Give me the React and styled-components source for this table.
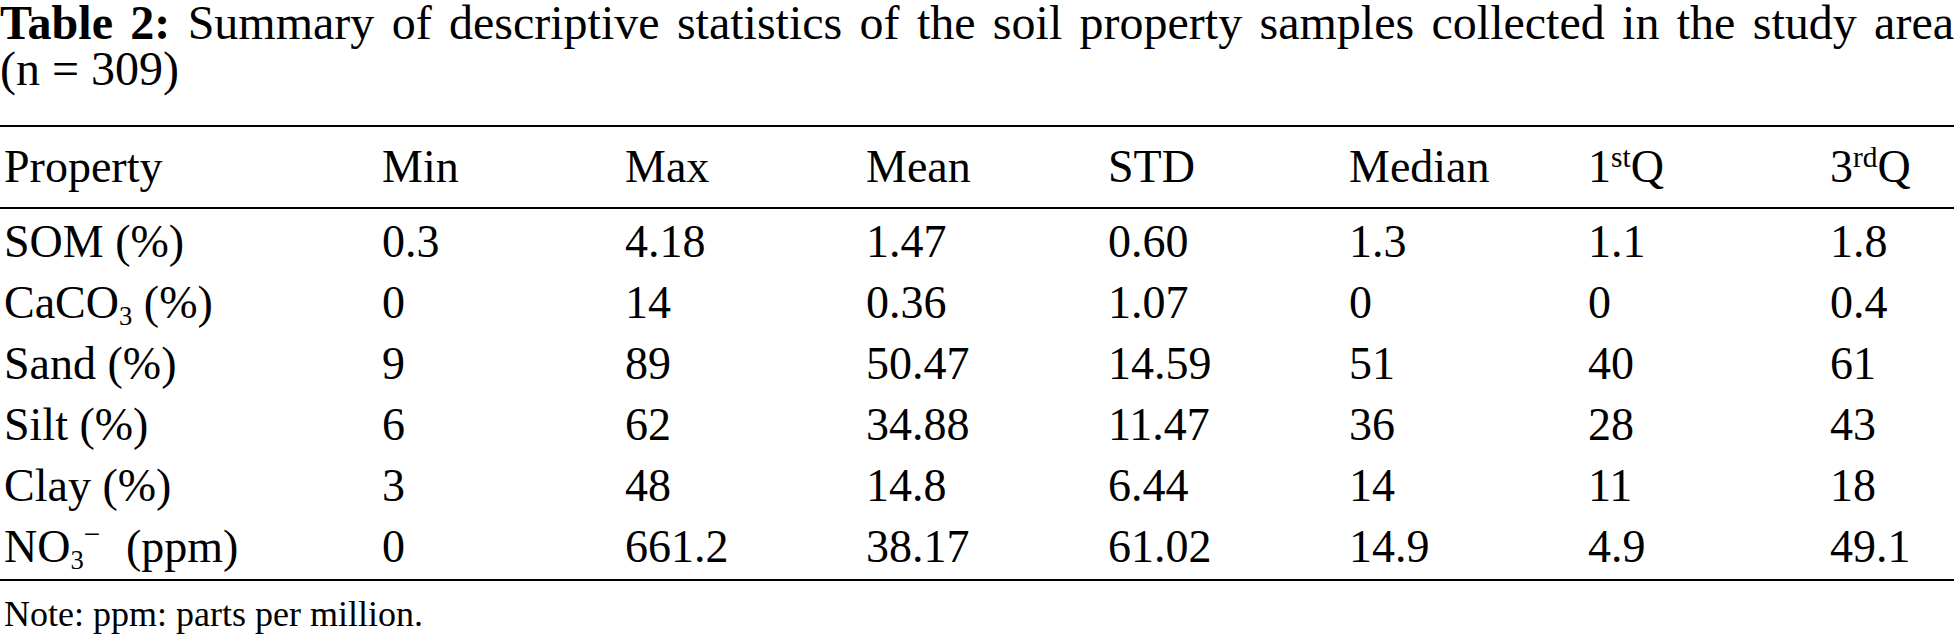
import React from "react";
import styled, { createGlobalStyle } from "styled-components";

const GlobalStyle = createGlobalStyle`
  html, body {
    margin: 0;
    padding: 0;
    background: #fff;
  }
`;

const Page = styled.div`
  width: 1954px;
  background: #fff;
  color: #000;
  font-family: "Liberation Serif", "Times New Roman", serif;
`;

const Caption = styled.div`
  font-size: 48px;
  line-height: 46px;
`;

const CaptionLine = styled.span`
  display: block;
  text-align: ${(p) => (p.$justify ? "justify" : "left")};
  text-align-last: ${(p) => (p.$justify ? "justify" : "left")};
`;

const Label = styled.b`
  font-weight: 700;
`;

const Table = styled.div`
  margin-top: 33px;
  border-top: 2px solid #000;
  border-bottom: 2px solid #000;
  font-size: 46px;
`;

const Body = styled.div`
  padding: 2px 0 2px;
`;

const Row = styled.div`
  display: grid;
  grid-template-columns: 382px 243px 241px 242px 241px 239px 242px 1fr;
  align-items: center;
  height: ${(p) => (p.$head ? "80px" : "61px")};
  border-bottom: ${(p) => (p.$head ? "2px solid #000" : "none")};
`;

const Cell = styled.div`
  padding-left: ${(p) => (p.$first ? "4px" : "0")};
  line-height: 46px;
  white-space: nowrap;
`;

const Sup = styled.sup`
  font-size: 0.64em;
  vertical-align: ${(p) => p.$raise || "0.5em"};
  line-height: 0;
  margin-right: ${(p) => p.$after || "0"};
`;

const Sub = styled.sub`
  font-size: 0.58em;
  vertical-align: -0.25em;
  line-height: 0;
`;

const Note = styled.div`
  font-size: 36px;
  line-height: 40px;
  padding: 13px 0 0 4px;
`;

const head = [
  "Property",
  "Min",
  "Max",
  "Mean",
  "STD",
  "Median",
  <>1<Sup>st</Sup>Q</>,
  <>3<Sup>rd</Sup>Q</>,
];

const rows = [
  ["SOM (%)", "0.3", "4.18", "1.47", "0.60", "1.3", "1.1", "1.8"],
  [<>CaCO<Sub>3</Sub> (%)</>, "0", "14", "0.36", "1.07", "0", "0", "0.4"],
  ["Sand (%)", "9", "89", "50.47", "14.59", "51", "40", "61"],
  ["Silt (%)", "6", "62", "34.88", "11.47", "36", "28", "43"],
  ["Clay (%)", "3", "48", "14.8", "6.44", "14", "11", "18"],
  [
    <>NO<Sub>3</Sub><Sup $raise="0.6em" $after="14px">−</Sup> (ppm)</>,
    "0", "661.2", "38.17", "61.02", "14.9", "4.9", "49.1",
  ],
];

export default function App() {
  return (
    <Page>
      <GlobalStyle />
      <Caption>
        <CaptionLine $justify>
          <Label>Table 2:</Label> Summary of descriptive statistics of the soil property samples collected in the study area
        </CaptionLine>
        <CaptionLine>(n = 309)</CaptionLine>
      </Caption>
      <Table>
        <Row $head>
          {head.map((h, i) => (
            <Cell key={i} $first={i === 0}>{h}</Cell>
          ))}
        </Row>
        <Body>
          {rows.map((r, ri) => (
            <Row key={ri}>
              {r.map((c, ci) => (
                <Cell key={ci} $first={ci === 0}>{c}</Cell>
              ))}
            </Row>
          ))}
        </Body>
      </Table>
      <Note>Note: ppm: parts per million.</Note>
    </Page>
  );
}
